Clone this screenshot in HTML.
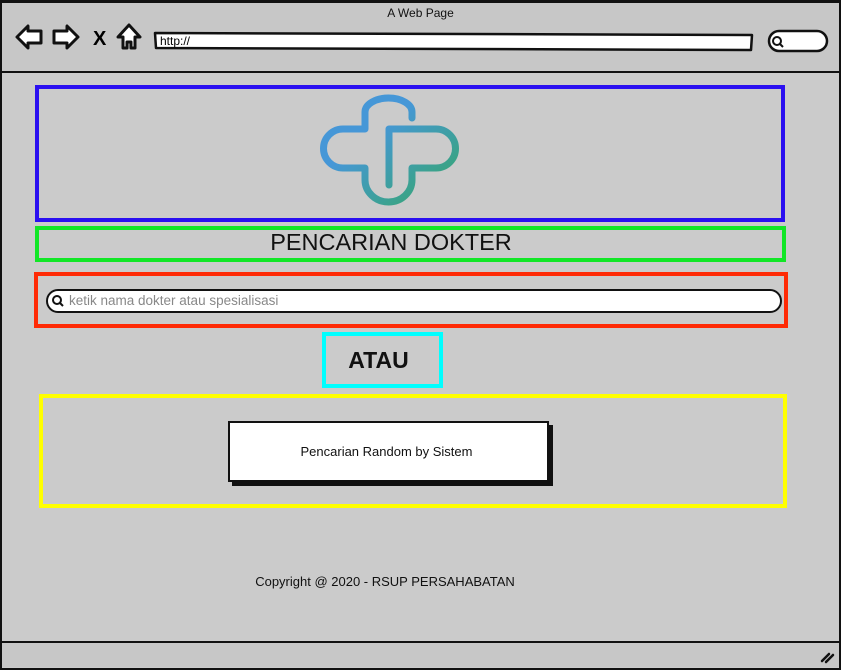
<!DOCTYPE html>
<html><head><meta charset="utf-8"><style>
body{margin:0;width:841px;height:670px;overflow:hidden;background:#fff;font-family:"Liberation Sans",sans-serif}
.a{position:absolute;box-sizing:border-box}
</style></head><body>
<div class="a" style="left:0;top:0;width:841px;height:670px;background:#cbcbcb;border:2px solid #111;border-top-width:3px"></div>
<div class="a" style="left:2px;top:3px;width:837px;height:70px;background:#c7c7c7;border-bottom:2px solid #111"></div>
<div class="a" style="left:2px;top:641px;width:837px;height:26px;background:#c7c7c7;border-top:2px solid #111"></div>
<div class="a" style="left:0;top:6px;width:841px;text-align:center;font-size:12px;color:#111">A Web Page</div>
<svg class="a" style="left:0;top:0" width="841" height="80">
<g fill="#fff" stroke="#111" stroke-width="3" stroke-linejoin="round">
<path d="M17,37 L28,26 V31 H41 V43 H28 V48 Z"/>
<path d="M78,37 L67,26 V31 H54 V43 H67 V48 Z"/>
<path d="M129,25 L140,37 H135 V48 H131 V42 H127 V48 H123 V37 H118 Z"/>
<path d="M155,33 L752,35 L751,50 L156,48 Z" stroke-width="2.5"/>
<rect x="769" y="31" width="58" height="20" rx="10" stroke-width="2.5"/>
</g>
<text x="93" y="45" font-size="20" font-weight="bold" font-family="Liberation Sans">X</text>
<text x="160" y="45" font-size="12" font-family="Liberation Sans">http://</text>
<circle cx="777" cy="41" r="4" fill="none" stroke="#111" stroke-width="2"/>
<line x1="780" y1="44" x2="783" y2="47" stroke="#111" stroke-width="2"/>
</svg>
<svg class="a" style="left:0;top:0" width="841" height="670">
<defs><linearGradient id="g" x1="0" y1="0" x2="1" y2="1"><stop offset="0.35" stop-color="#4697d7"/><stop offset="1" stop-color="#35a865"/></linearGradient></defs>
<path d="M389,185 V129 H436 A19.5,19.5 0 0 1 436,168 H412 V180 A23.5,22 0 0 1 365,180 V168 H343 A19.5,19.5 0 0 1 343,129 H365 V112 A23.5,14 0 0 1 412,112 V118" fill="none" stroke="url(#g)" stroke-width="7" stroke-linecap="round" stroke-linejoin="round"/>
<path d="M822,661 L829,654 M826,662 L833,655" stroke="#111" stroke-width="2.5" stroke-linecap="round"/>
</svg>
<div class="a" style="left:35px;top:85px;width:750px;height:137px;border:4px solid #2a0ff0"></div>
<div class="a" style="left:35px;top:226px;width:751px;height:36px;border:4px solid #12e626"></div>
<div class="a" style="left:191px;top:228px;width:400px;text-align:center;font-size:23.5px;line-height:28px;color:#111">PENCARIAN DOKTER</div>
<div class="a" style="left:34px;top:272px;width:754px;height:56px;border:4px solid #ff2a05"></div>
<div class="a" style="left:46px;top:289px;width:736px;height:24px;border:2px solid #111;border-radius:12px;background:#fff;padding-left:21px;font-size:13.5px;line-height:20px;color:#888">ketik nama dokter atau spesialisasi</div>
<svg class="a" style="left:51px;top:294px" width="14" height="14"><circle cx="6" cy="6" r="4" fill="none" stroke="#111" stroke-width="2"/><line x1="9" y1="9" x2="12" y2="12" stroke="#111" stroke-width="2"/></svg>
<div class="a" style="left:322px;top:332px;width:121px;height:56px;border:4px solid #00ffff;text-align:center;font-size:23px;font-weight:bold;line-height:48px;color:#111;padding-right:8px">ATAU</div>
<div class="a" style="left:39px;top:394px;width:748px;height:114px;border:4px solid #ffff00"></div>
<div class="a" style="left:228px;top:421px;width:321px;height:61px;background:#fff;border:2px solid #111;box-shadow:4px 4px 0 #111;text-align:center;font-size:13px;line-height:57px;color:#111;padding-right:4px">Pencarian Random by Sistem</div>
<div class="a" style="left:0;top:574px;width:770px;text-align:center;font-size:13px;color:#111">Copyright @ 2020 - RSUP PERSAHABATAN</div>
</body></html>
